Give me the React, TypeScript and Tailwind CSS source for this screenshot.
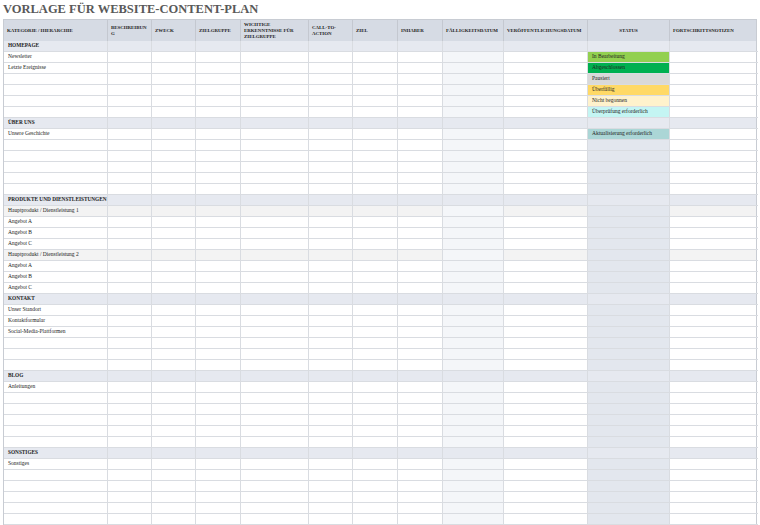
import React from 'react';

const headers = [
  'KATEGORIE / HIERARCHIE', 'BESCHREIBUNG', 'ZWECK', 'ZIELGRUPPE', 'WICHTIGE ERKENNTNISSE FÜR ZIELGRUPPE',
  'CALL-TO-ACTION', 'ZIEL', 'INHABER', 'FÄLLIGKEITSDATUM', 'VERÖFFENTLICHUNGSDATUM', 'STATUS', 'FORTSCHRITTSNOTIZEN',
];

type Row = { label?: string; kind?: 'section' | 'sub' };

const statusRows: Record<number, [string, string]> = {
  1: ['In Bearbeitung', 'bg-[#92d050]'],
  2: ['Abgeschlossen', 'bg-[#00b050]'],
  3: ['Pausiert', 'bg-[#d9d9d9]'],
  4: ['Überfällig', 'bg-[#ffd966]'],
  5: ['Nicht begonnen', 'bg-[#fff2cc]'],
  6: ['Überprüfung erforderlich', 'bg-[#c4f5f3]'],
  8: ['Aktualisierung erforderlich', 'bg-[#abd6d6]'],
};

const blank = (n: number): Row[] => Array.from({ length: n }, () => ({}));

const rows: Row[] = [
  { label: 'HOMEPAGE', kind: 'section' },
  { label: 'Newsletter' },
  { label: 'Letzte Ereignisse' },
  ...blank(4),
  { label: 'ÜBER UNS', kind: 'section' },
  { label: 'Unsere Geschichte' },
  ...blank(5),
  { label: 'PRODUKTE UND DIENSTLEISTUNGEN', kind: 'section' },
  { label: 'Hauptprodukt / Dienstleistung 1', kind: 'sub' },
  { label: 'Angebot A' },
  { label: 'Angebot B' },
  { label: 'Angebot C' },
  { label: 'Hauptprodukt / Dienstleistung 2', kind: 'sub' },
  { label: 'Angebot A' },
  { label: 'Angebot B' },
  { label: 'Angebot C' },
  { label: 'KONTAKT', kind: 'section' },
  { label: 'Unser Standort' },
  { label: 'Kontaktformular' },
  { label: 'Social-Media-Plattformen' },
  ...blank(3),
  { label: 'BLOG', kind: 'section' },
  { label: 'Anleitungen' },
  ...blank(5),
  { label: 'SONSTIGES', kind: 'section' },
  { label: 'Sonstiges' },
  ...blank(5),
];

const grid = 'grid grid-cols-[104px_44px_44px_45px_68px_44px_45px_45px_61px_84px_82px_88px]';

export default function App() {
  return (
    <div className="w-[760px] h-[525px] bg-white overflow-hidden" style={{ fontFamily: '"Liberation Serif", "DejaVu Serif", serif' }}>
      <div className="pl-[3px] pt-[2px] h-[19px] text-[12.5px] leading-[15px] text-[#595959] font-semibold">
        VORLAGE FÜR WEBSITE-CONTENT-PLAN
      </div>
      <div className="ml-[3px] w-[754px] border border-[#c8ccd3]">
        <div className={`${grid} h-[21px] bg-[#d6dbe4]`}>
          {headers.map((h, i) => (
            <div
              key={i}
              className={`border-r border-[#c4c8d0] last:border-r-0 px-[3px] flex items-center text-[4.9px] leading-[6px] font-bold text-[#222] [overflow-wrap:anywhere] ${i === 10 ? 'justify-center' : ''}`}
            >
              {h}
            </div>
          ))}
        </div>
        {rows.map((r, ri) => {
          const st = statusRows[ri];
          const sec = r.kind === 'section';
          return (
            <div key={ri} className={`${grid} h-[11px] ${sec ? 'bg-[#e6e9f0]' : r.kind === 'sub' ? 'bg-[#f3f3f3]' : 'bg-white'}`}>
              {headers.map((_, ci) => {
                let cls = '';
                let text: string | undefined;
                if (ci === 0) {
                  text = r.label;
                  cls = sec ? 'font-bold text-[5.3px]' : 'text-[5.5px]';
                }
                if (ci === 8 && !sec) cls += ' bg-[#f4f6f9]';
                if (ci === 10 && !sec) {
                  if (st) {
                    text = st[0];
                    cls += ` ${st[1]} text-[5.5px]`;
                  } else cls += ' bg-[#e3e7ee]';
                }
                return (
                  <div
                    key={ci}
                    className={`border-r border-b border-[#d9dce1] last:border-r-0 px-[4px] flex items-center leading-none text-[#222] whitespace-nowrap overflow-hidden ${cls}`}
                  >
                    {text}
                  </div>
                );
              })}
            </div>
          );
        })}
      </div>
    </div>
  );
}
